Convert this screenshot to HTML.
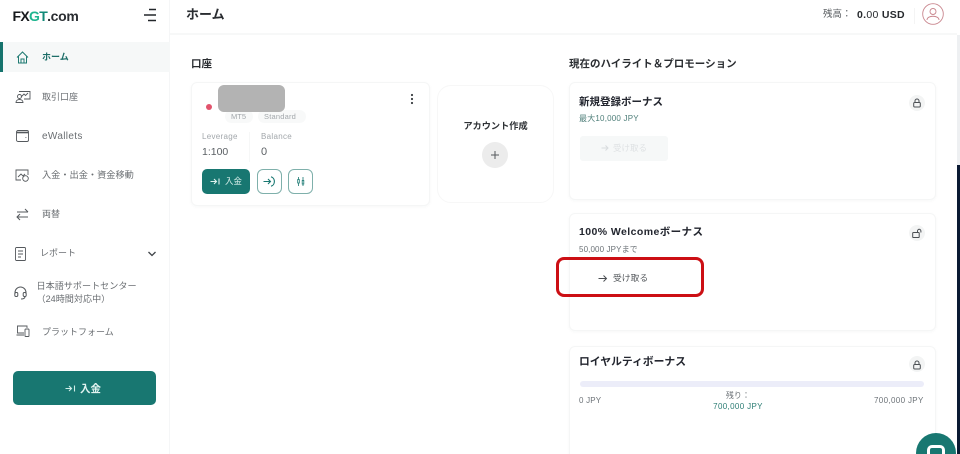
<!DOCTYPE html>
<html lang="ja"><head><meta charset="utf-8"><title>FXGT</title>
<style>
*{box-sizing:border-box;margin:0;padding:0}
html,body{width:960px;height:454px;overflow:hidden;background:#fff}
body{position:relative;font-family:"Liberation Sans","Noto Sans CJK JP",sans-serif;color:#23262f;filter:blur(.3px)}
.a{position:absolute;white-space:nowrap}
.nav{font-size:9.5px;color:#6a6e72;left:42px;line-height:12px}
.card{position:absolute;background:#fff;border:1px solid #f5f6f6;border-radius:6px;box-shadow:0 1px 3px rgba(40,50,60,.035)}
.title{font-size:10.5px;font-weight:700;color:#23262f;line-height:14px}
.small{font-size:8px;color:#6d7378;line-height:10px;letter-spacing:.12px}
.lockbg{position:absolute;width:16px;height:16px;border-radius:50%;background:#f3f4f4}
svg{position:absolute;overflow:visible;fill:none}
</style></head><body>
<!-- sidebar -->
<div class="a" style="left:169px;top:0;width:1px;height:454px;background:#f5f6f7"></div>
<div class="a" style="left:170px;top:33px;width:787px;height:2px;background:#f7f8f8"></div>
<div class="a" style="left:12.5px;top:7px;font-size:14px;line-height:18px;font-weight:700;letter-spacing:-.7px;color:#16191c">FX<span style="color:#1fb58f">G</span><span style="color:#128a78">T</span><span style="color:#2b2e32;letter-spacing:-.3px">.com</span></div>
<svg style="left:143px;top:8px" width="14" height="14" stroke="#22262a" stroke-width="1.4"><path d="M6 1.5H13M1 7H13M5 12.5H13"/></svg>

<div class="a" style="left:0;top:42px;width:170px;height:30px;background:#f6f8f8"></div>
<div class="a" style="left:0;top:42px;width:3px;height:30px;background:#16736d"></div>
<svg style="left:16px;top:51px" width="13" height="13" stroke="#1f7a72" stroke-width="1"><path d="M1 6.5 6.5 1 12 6.5M2.5 5.5V12H10.5V5.5M5 12V8H8V12"/></svg>
<div class="a nav" style="top:51px;color:#1d6e68;font-weight:700;font-size:9px">ホーム</div>

<svg style="left:15px;top:90px" width="16" height="13" stroke="#55595d" stroke-width=".9"><path d="M4 1.5H15V9H9M6 7l3-3 1.5 1.5L13 3"/><circle cx="4.5" cy="6.5" r="2"/><path d="M1 12.5c0-4 7-4 7 0z"/></svg>
<div class="a nav" style="top:91px;font-size:9px">取引口座</div>

<svg style="left:16px;top:130px" width="13" height="12" stroke="#55595d" stroke-width=".9"><rect x=".5" y=".5" width="12" height="11" rx="1.5"/><path d="M.5 2.5H12.5" stroke-width="1.6"/><path d="M9.5 7.5h.8"/></svg>
<div class="a nav" style="top:131px;font-size:10px;letter-spacing:.35px">eWallets</div>

<svg style="left:15px;top:169px" width="15" height="13" stroke="#55595d" stroke-width=".9"><path d="M6 11H1V1H13V6M3 8l3-3 2 2 2-2"/><circle cx="10.5" cy="9.5" r="2.8"/></svg>
<div class="a nav" style="top:169px;font-size:9.2px">入金・出金・資金移動</div>

<svg style="left:16px;top:208px" width="13" height="13" stroke="#55595d" stroke-width="1"><path d="M1 4H12M9 1l3 3M12 9H1M4 6 1 9 4 12"/></svg>
<div class="a nav" style="top:208px;font-size:9px">両替</div>

<svg style="left:15px;top:247px" width="11" height="14" stroke="#55595d" stroke-width=".9"><rect x=".5" y=".5" width="10" height="13" rx="1"/><path d="M3 4H8M3 7H8M3 10H6"/></svg>
<div class="a nav" style="top:247px;left:40px;font-size:9px">レポート</div>
<svg style="left:148px;top:251px" width="8" height="6" stroke="#3f4448" stroke-width="1.3"><path d="M.5 1 4 4.5 7.5 1"/></svg>

<svg style="left:14px;top:286px" width="13" height="14" stroke="#55595d" stroke-width="1"><path d="M1 8V6.5a5.5 5.5 0 0 1 11 0V8"/><rect x=".8" y="6.5" width="3" height="4" rx="1.2"/><rect x="9.2" y="6.5" width="3" height="4" rx="1.2"/><path d="M11 10.5c0 2-2 2.5-4 2.5"/></svg>
<div class="a nav" style="top:280px;left:36.5px;font-size:9.1px;line-height:13px">日本語サポートセンター<br>（24時間対応中）</div>

<svg style="left:16px;top:325px" width="14" height="12" stroke="#55595d" stroke-width=".9"><path d="M8 8H1.5V1H11V3M.5 10H8"/><rect x="9" y="4" width="4" height="7.5" rx=".8"/></svg>
<div class="a nav" style="top:326px;font-size:9px">プラットフォーム</div>

<div class="a" style="left:13px;top:371px;width:143px;height:34px;border-radius:5px;background:#187771"></div>
<svg style="left:65px;top:384px" width="11" height="9" stroke="#cfeee8" stroke-width="1.1"><path d="M.5 4.5H6M4 2 6.5 4.5 4 7M9.5 1.5V7.5"/></svg>
<div class="a" style="left:80px;top:382px;font-size:10.5px;line-height:14px;font-weight:700;color:#e2f3f0">入金</div>

<!-- header -->
<div class="a" style="left:186px;top:6px;font-size:13px;line-height:18px;font-weight:700;color:#2a2d31">ホーム</div>
<div class="a" style="left:823px;top:8px;font-size:9.5px;line-height:14px;color:#55595d">残高：</div>
<div class="a" style="left:857px;top:8px;font-size:10.5px;line-height:14px;color:#26292d;font-weight:700;letter-spacing:.3px">0.<span style="font-weight:400">00</span> USD</div>
<div class="a" style="left:914px;top:8px;width:1px;height:16px;background:#f4f4f4"></div>
<svg style="left:922px;top:3px" width="22" height="22" stroke="#c9868e" stroke-width=".9"><circle cx="11" cy="11" r="10.3"/><circle cx="11" cy="8.5" r="3"/><path d="M5 17c0-5 12-5 12 0"/></svg>

<!-- scrollbar -->
<div class="a" style="left:957px;top:35px;width:3px;height:130px;background:#eef0f2"></div>
<div class="a" style="left:957px;top:165px;width:3px;height:289px;background:#0b1a33"></div>

<!-- accounts -->
<div class="a" style="left:191px;top:57px;font-size:10.5px;line-height:14px;font-weight:700;color:#2a2d31">口座</div>
<div class="card" style="left:191px;top:82px;width:239px;height:124px"></div>
<div class="a" style="left:206px;top:104px;width:6px;height:6px;border-radius:50%;background:#e2536c"></div>
<div class="a" style="left:225px;top:110px;width:28px;height:13px;border-radius:7px;background:#f8f9f9"></div>
<div class="a" style="left:258px;top:110px;width:48px;height:13px;border-radius:7px;background:#f8f9f9"></div>
<div class="a" style="left:231px;top:112px;font-size:7.5px;line-height:10px;color:#a2a7ab">MT5</div>
<div class="a" style="left:264px;top:112px;font-size:7.5px;line-height:10px;color:#a2a7ab;letter-spacing:.2px">Standard</div>
<div class="a" style="left:218px;top:85px;width:67px;height:27px;border-radius:6px;background:#b3b3b3"></div>
<div class="a" style="left:202px;top:132px;font-size:8px;line-height:10px;color:#a2a7ab;letter-spacing:.3px">Leverage</div>
<div class="a" style="left:261px;top:132px;font-size:8px;line-height:10px;color:#a2a7ab;letter-spacing:.3px">Balance</div>
<div class="a" style="left:249px;top:132px;width:1px;height:30px;background:#f6f7f7"></div>
<div class="a" style="left:202px;top:146px;font-size:10.5px;line-height:13px;color:#5b6064">1:100</div>
<div class="a" style="left:261px;top:146px;font-size:11px;line-height:13px;color:#5b6064">0</div>
<div class="a" style="left:202px;top:169px;width:48px;height:25px;border-radius:5px;background:#187771"></div>
<svg style="left:210px;top:177px" width="10" height="9" stroke="#dff2ee" stroke-width="1.1"><path d="M.5 4.5H6M4 2 6.5 4.5 4 7M9 1.5V7.5"/></svg>
<div class="a" style="left:225px;top:176px;font-size:8.5px;line-height:11px;color:#d5ece8">入金</div>
<div class="a" style="left:257px;top:169px;width:25px;height:25px;border-radius:6px;border:1px solid #7fb0ab"></div>
<svg style="left:263px;top:176px" width="13" height="11" stroke="#187771" stroke-width="1.1"><path d="M.5 5.5H7.5M5 3 7.5 5.5 5 8M8 .8c4.5 1 4.5 8.5 0 9.4"/></svg>
<div class="a" style="left:288px;top:169px;width:25px;height:25px;border-radius:6px;border:1px solid #7fb0ab"></div>
<svg style="left:297px;top:177px" width="8" height="9" stroke="#187771" stroke-width=".8"><path d="M1.5 0V9M6 0V9"/><rect x=".7" y="2.5" width="1.6" height="3.5" fill="#fff"/><rect x="5.2" y="3.5" width="1.6" height="3.5" fill="#fff"/></svg>
<svg style="left:410px;top:93px" width="4" height="12"><circle cx="2" cy="2" r="1.1" fill="#3a3e42"/><circle cx="2" cy="6" r="1.1" fill="#3a3e42"/><circle cx="2" cy="10" r="1.1" fill="#3a3e42"/></svg>

<div class="card" style="left:437px;top:85px;width:117px;height:118px;border-radius:14px;box-shadow:none;border-color:#f7f7f7"></div>
<div class="a" style="left:437px;top:119px;width:117px;text-align:center;font-size:9.2px;line-height:14px;font-weight:700;color:#2e3135">アカウント作成</div>
<div class="a" style="left:482px;top:142px;width:26px;height:26px;border-radius:50%;background:#ececec"></div>
<svg style="left:490px;top:150px" width="10" height="10" stroke="#55595d" stroke-width="1"><path d="M5 1V9M1 5H9"/></svg>

<!-- promotions -->
<div class="a" style="left:569px;top:57px;font-size:10.5px;line-height:14px;font-weight:700;color:#2a2d31">現在のハイライト＆プロモーション</div>

<div class="card" style="left:569px;top:82px;width:367px;height:118px"></div>
<div class="a title" style="left:579px;top:95px">新規登録ボーナス</div>
<div class="a small" style="left:579px;top:114px;color:#4f7f7a;letter-spacing:.2px">最大10,000 JPY</div>
<div class="a" style="left:580px;top:136px;width:88px;height:25px;border-radius:3px;background:#f6f8f8"></div>
<svg style="left:601px;top:144px" width="8" height="8" stroke="#d8dcde" stroke-width="1"><path d="M.5 4H7M4.5 1.5 7 4 4.5 6.5"/></svg>
<div class="a" style="left:613px;top:142px;font-size:8.5px;line-height:12px;color:#dfe2e4">受け取る</div>
<div class="lockbg" style="left:909px;top:95px"></div>
<svg style="left:913px;top:98px" width="8" height="10" stroke="#4b4f53" stroke-width="1"><path d="M2 4.5V3a2 2 0 0 1 4 0V4.5"/><rect x=".7" y="4.5" width="6.6" height="4.5" rx="1"/></svg>

<div class="card" style="left:569px;top:213px;width:367px;height:118px"></div>
<div class="a title" style="left:579px;top:225px;letter-spacing:.42px">100% Welcomeボーナス</div>
<div class="a small" style="left:579px;top:245px">50,000 JPYまで</div>
<svg style="left:598px;top:274px" width="10" height="9" stroke="#4b4f53" stroke-width="1"><path d="M.5 4.5H8.5M5.5 1.5 8.5 4.5 5.5 7.5"/></svg>
<div class="a" style="left:613px;top:272px;font-size:8.8px;line-height:12px;color:#55595d">受け取る</div>
<div class="a" style="left:556px;top:257px;width:148px;height:40px;border:3.5px solid #cc0f14;border-radius:8px"></div>
<div class="lockbg" style="left:909px;top:225px"></div>
<svg style="left:912px;top:229px" width="11" height="10" stroke="#4b4f53" stroke-width="1"><rect x=".7" y="3.5" width="6.5" height="5" rx=".8"/><path d="M5.5 3.5V2a1.7 1.7 0 0 1 3.4 0V3.5"/></svg>

<div class="card" style="left:569px;top:346px;width:367px;height:120px"></div>
<div class="a title" style="left:579px;top:355px;font-size:10.8px">ロイヤルティボーナス</div>
<div class="a" style="left:580px;top:381px;width:344px;height:6px;border-radius:3px;background:#ecedf9"></div>
<div class="a small" style="left:579px;top:396px;letter-spacing:.2px">0 JPY</div>
<div class="a small" style="left:653px;top:391px;width:170px;text-align:center">残り：</div>
<div class="a small" style="left:653px;top:402px;width:170px;text-align:center;color:#2c7d74;letter-spacing:.35px">700,000 JPY</div>
<div class="a small" style="left:874px;top:396px;letter-spacing:.35px">700,000 JPY</div>
<div class="lockbg" style="left:909px;top:356px"></div>
<svg style="left:913px;top:360px" width="8" height="10" stroke="#4b4f53" stroke-width="1"><path d="M2 4.5V3a2 2 0 0 1 4 0V4.5"/><rect x=".7" y="4.5" width="6.6" height="4.5" rx="1"/></svg>

<!-- chat -->
<div class="a" style="left:916px;top:433px;width:40px;height:40px;border-radius:50%;background:#187771"></div>
<div class="a" style="left:927px;top:445px;width:18px;height:18px;border:3px solid #fff;border-radius:5px"></div>
</body></html>
